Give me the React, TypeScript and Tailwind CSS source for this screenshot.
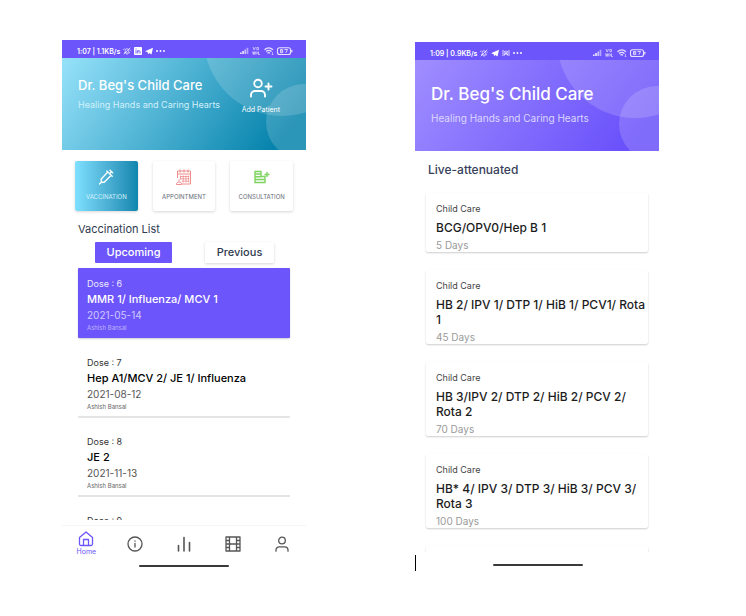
import type { ReactNode } from "react";

type Dose = { dose: number; title: string; date: string; parent: string };
type Vaccine = { title: string; due: string };

const doses: Dose[] = [
  { dose: 6, title: "MMR 1/ Influenza/ MCV 1", date: "2021-05-14", parent: "Ashish Bansal" },
  { dose: 7, title: "Hep A1/MCV 2/ JE 1/ Influenza", date: "2021-08-12", parent: "Ashish Bansal" },
  { dose: 8, title: "JE 2", date: "2021-11-13", parent: "Ashish Bansal" },
  { dose: 9, title: "", date: "", parent: "" },
];

const vaccines: Vaccine[] = [
  { title: "BCG/OPV0/Hep B 1", due: "5 Days" },
  { title: "HB 2/ IPV 1/ DTP 1/ HiB 1/ PCV1/ Rota 1", due: "45 Days" },
  { title: "HB 3/IPV 2/ DTP 2/ HiB 2/ PCV 2/ Rota 2", due: "70 Days" },
  { title: "HB* 4/ IPV 3/ DTP 3/ HiB 3/ PCV 3/ Rota 3", due: "100 Days" },
];

function MuteIcon() {
  return (
    <svg viewBox="0 0 16 16" className="size-2" fill="none" stroke="currentColor" strokeWidth="1.400">
      <path d="M3 12h10l-1.500-2V7a3.500 3.500 0 0 0-7 0v3L3 12zM6.500 14h3M1.500 14.500l13-13M1 6l1.500-3M15 7l-1-2" />
    </svg>
  );
}

function LinkedInIcon() {
  return (
    <svg viewBox="0 0 16 16" className="size-2">
      <rect width="16" height="16" rx="1.500" fill="currentColor" />
      <path d="M4 6.500V13M4 3v1.800M7.500 13V6.500M7.500 9.500c0-3 4.500-3 4.500 0V13" fill="none" stroke="#6c55fb" strokeWidth="1.900" />
    </svg>
  );
}

function TelegramIcon() {
  return (
    <svg viewBox="0 0 16 16" className="size-2" fill="currentColor">
      <path d="M0 8.500 16 1.500 13 15 8.500 12 6 14.500 5.500 10.500z" />
    </svg>
  );
}

function CastIcon() {
  return (
    <svg viewBox="0 0 16 16" className="size-2" fill="none" stroke="currentColor" strokeWidth="1.500">
      <path d="M2 2v12M14 2v12M4.500 4c2 2.500 2 5.500 0 8M11.500 4c-2 2.500-2 5.500 0 8M5 13l3-5 3 5M8 3v5" />
    </svg>
  );
}

function DotsIcon() {
  return (
    <svg viewBox="0 0 18 16" className="h-2 w-[9px]" fill="currentColor">
      <circle cx="2" cy="8" r="1.900" />
      <circle cx="9" cy="8" r="1.900" />
      <circle cx="16" cy="8" r="1.900" />
    </svg>
  );
}

function SignalIcons() {
  return (
    <svg viewBox="0 0 53 10" className="h-[10px] w-[53px] text-[#e6e1ff]" fill="currentColor" aria-label="Signal, wifi and battery">
      <rect x="0" y="6.500" width="1.700" height="1.500" />
      <rect x="2.200" y="5" width="1.700" height="3" />
      <rect x="4.400" y="3.500" width="1.700" height="4.500" opacity=".75" />
      <rect x="6.600" y="1.800" width="1.700" height="6.200" opacity=".6" />
      <path d="m13 1 1.200 3L15.500 1M16.800 1.500h1.700v2.200h-1.700zM12.500 5.500l.8 3 .8-3 .8 3 .8-3M16.800 5.500v3M18.500 5.500v3h1.500M17 7h1.500" fill="none" stroke="currentColor" strokeWidth=".7" />
      <path d="M24.500 3.700c2.500-2.200 6-2.200 8.500 0M26 5.500c1.800-1.500 3.800-1.500 5.500 0M27.500 7.200c.8-.7 1.700-.7 2.500 0" fill="none" stroke="currentColor" strokeWidth="1.300" />
      <path d="M32.500 6v2.800M31.700 8l.8.900.8-.9" fill="none" stroke="currentColor" strokeWidth=".6" />
      <rect x="37.500" y="1.700" width="13" height="6.800" rx="2" fill="none" stroke="currentColor" strokeWidth="1.100" />
      <rect x="51.200" y="3.800" width="1.200" height="2.600" rx=".5" />
      <path d="M40.500 3.500h2.200v3.200h-2.200zM40.500 5h2.200M44.500 3.500h3L45.800 6.800" fill="none" stroke="currentColor" strokeWidth=".9" />
    </svg>
  );
}

function StatusBar({ label, children }: { label: string; children: ReactNode }) {
  return (
    <div className="flex h-[18px] items-center justify-between bg-[#6c55fb] pt-1 pr-[13px] pl-[15px] text-white">
      <div className="flex items-center gap-[3px]">
        <span className="text-[7px] leading-none font-semibold whitespace-nowrap">{label}</span>
        {children}
      </div>
      <SignalIcons />
    </div>
  );
}

function Bubbles() {
  return (
    <svg className="absolute top-0 right-0 h-full w-[104px]" viewBox="140 0 104 92" preserveAspectRatio="xMaxYMin slice" fill="#fff" fillOpacity=".16" aria-hidden="true">
      <circle cx="220" cy="-20" r="78" />
      <circle cx="242" cy="64" r="38" />
    </svg>
  );
}

function AddPatientIcon() {
  return (
    <svg viewBox="0 0 24 20" className="h-5 w-6" fill="none" stroke="currentColor" strokeWidth="1.900" strokeLinecap="round">
      <circle cx="9" cy="5.500" r="3.800" />
      <path d="M2 18.500v-1.500a4 4 0 0 1 4-4h6a4 4 0 0 1 4 4v1.500M19.500 5.500v6M16.500 8.500h6" />
    </svg>
  );
}

function SyringeIcon() {
  return (
    <svg viewBox="0 0 16 16" className="size-4 text-white" fill="none" stroke="currentColor" strokeWidth="1.300" strokeLinecap="round" strokeLinejoin="round">
      <path d="m1.500 15 2-2M3 10.300 3.500 13l2.700.3 7-7L9.800 3zM8.800 2l5.400 5.200M11.500 4.700l2-2M12 1.200l2.700 2.600" />
    </svg>
  );
}

function CalendarIcon() {
  return (
    <svg viewBox="0 0 16 16" className="size-4 text-[#f08080]" fill="none" stroke="currentColor" strokeWidth=".9">
      <path d="M1.500 9V2h13v13H5.500M1.500 5h13M4 .5v3M8 .5v3M12 .5v3" />
      <path d="M4 7.500h9M4 9.800h9M6 12.200h7M4.500 6.500v4M7.200 6.500v7M10 6.500v7M12.700 6.500v7" strokeWidth=".7" />
      <path d="M.5 15.500c0-2 1-2.500 2.500-2.500s2.500.5 2.500 2.500zM3 10.500v2" />
    </svg>
  );
}

function ConsultIcon() {
  return (
    <svg viewBox="0 0 16 14" className="h-[14px] w-4 text-[#7ed45f]" fill="none" stroke="currentColor" strokeWidth="1.400">
      <path d="M1 1.500h6v5h4v6H1zM1 4h6M1 6.700h6M1 9.500h10M13 2v5M10.500 4.500h5" />
    </svg>
  );
}

function ServiceCard({ label, icon, active = false }: { label: string; icon: ReactNode; active?: boolean }) {
  const look = active
    ? "bg-linear-to-r from-[#7fe0ff] to-[#0a86ae] text-[#d3f0fa]"
    : "bg-white text-[#666a78]";
  return (
    <button className={`flex h-[50px] flex-col items-center gap-[7px] rounded-xs pt-2 shadow-[0_1px_3px_rgba(0,0,0,0.16)] ${look}`}>
      <span className="flex h-4 items-center">{icon}</span>
      <span className="text-[6px] leading-[10px]">{label}</span>
    </button>
  );
}

function DoseCard({ item, active }: { item: Dose; active: boolean }) {
  const box = active
    ? "bg-[#6c55fb] text-white shadow-[0_1px_2px_rgba(0,0,0,0.2)]"
    : "border-b border-[#e4e4e4] bg-white text-black shadow-[0_1px_0_#e4e4e4]";
  const date = active ? "text-[#cfc8ff]" : "text-[#555]";
  const parent = active ? "text-[#bdb3ff]" : "text-[#666]";
  return (
    <li className={`flex h-[70px] shrink-0 flex-col rounded-[1px] px-[9px] pt-[9px] ${box}`}>
      <span className={`text-[9px] leading-[14px] ${active ? "text-[#ece9ff]" : "text-[#333]"}`}>Dose : {item.dose}</span>
      <h3 className="text-[11px] leading-4 font-medium">{item.title}</h3>
      <span className={`text-[10px] leading-4 ${date}`}>{item.date}</span>
      <span className={`text-[6px] leading-[9px] ${parent}`}>{item.parent}</span>
    </li>
  );
}

function NavItem({ label, active = false, children }: { label: string; active?: boolean; children: ReactNode }) {
  return (
    <button aria-label={label} className={`flex flex-col items-center justify-center ${active ? "text-[#6c55fb]" : "text-[#555]"}`}>
      <svg viewBox="0 0 16 16" className="size-4" fill="none" stroke="currentColor" strokeWidth="1.300" strokeLinecap="round" strokeLinejoin="round">
        {children}
      </svg>
      {active && <span className="text-[7px] leading-[9px]">{label}</span>}
    </button>
  );
}

function HomeScreen() {
  return (
    <section className="min-w-0 flex-1">
      <StatusBar label="1:07 | 1.1KB/s">
        <MuteIcon />
        <LinkedInIcon />
        <TelegramIcon />
        <DotsIcon />
      </StatusBar>
      <header className="relative flex h-[92px] justify-between overflow-hidden bg-linear-[125deg] from-[#97e2fa] to-[#0482ab] to-90% pr-[26px] pl-4 text-white">
        <Bubbles />
        <div className="relative pt-[17px]">
          <h1 className="text-[13px] leading-5 font-medium whitespace-nowrap">Dr. Beg's Child Care</h1>
          <p className="text-[9px] leading-5 whitespace-nowrap text-[#d0f0fb]">Healing Hands and Caring Hearts</p>
        </div>
        <button className="relative flex flex-col items-center pt-5 text-[7px] leading-3 whitespace-nowrap">
          <AddPatientIcon />
          <span className="pt-[6px]">Add Patient</span>
        </button>
      </header>
      <div className="grid grid-cols-3 gap-[15px] px-[13px] pt-[11px]">
        <ServiceCard label="VACCINATION" icon={<SyringeIcon />} active />
        <ServiceCard label="APPOINTMENT" icon={<CalendarIcon />} />
        <ServiceCard label="CONSULTATION" icon={<ConsultIcon />} />
      </div>
      <h2 className="px-4 pt-[10px] text-[11px] leading-4 text-[#2f3a4f]">Vaccination List</h2>
      <div className="flex justify-between pt-[5px] pr-8 pl-[33px] text-[11px] leading-[21px] font-medium">
        <button className="w-[77px] rounded-[1px] bg-[#6c55fb] text-white">Upcoming</button>
        <button className="w-[69px] rounded-[1px] bg-white text-[#2f3a4f] shadow-[0_1px_3px_rgba(0,0,0,0.16)]">Previous</button>
      </div>
      <ul className="flex h-[257px] flex-col gap-[9px] overflow-hidden px-4 pt-[5px]">
        {doses.map((item, i) => (
          <DoseCard key={item.dose} item={item} active={i === 0} />
        ))}
      </ul>
      <nav className="mt-[5px] grid h-9 grid-cols-5 border-t border-[#f5f5f5]">
        <NavItem label="Home" active>
          <path d="M1.500 6.500 8 1l6.500 5.500V13a1.500 1.500 0 0 1-1.500 1.500H3A1.500 1.500 0 0 1 1.500 13zM5.500 14.500V8.500h5v6" />
        </NavItem>
        <NavItem label="Info">
          <circle cx="8" cy="8" r="7" />
          <path d="M8 7.500V11M8 5v.2" />
        </NavItem>
        <NavItem label="Statistics">
          <path d="M2.500 9.500V15M8 1.500V15M13.500 6.500V15" strokeWidth="1.600" />
        </NavItem>
        <NavItem label="Videos">
          <path d="M1 1h14v14H1zM4.500 1v14M11.500 1v14M1 8h14M1 4.500h3.500M1 11.500h3.500M11.500 4.500H15M11.500 11.500H15" />
        </NavItem>
        <NavItem label="Profile">
          <circle cx="8" cy="4.500" r="3.300" />
          <path d="M2 15.200V14a3.200 3.200 0 0 1 3.200-3.200h5.600A3.200 3.200 0 0 1 14 14v1.200" />
        </NavItem>
      </nav>
      <div className="mx-auto mt-1 h-[2px] w-[90px] rounded-full bg-[#3a3a3a]" />
    </section>
  );
}

function VaccineScreen() {
  return (
    <section className="min-w-0 flex-1 pt-[2px]">
      <StatusBar label="1:09 | 0.9KB/s">
        <MuteIcon />
        <TelegramIcon />
        <CastIcon />
        <DotsIcon />
      </StatusBar>
      <header className="relative h-[91px] overflow-hidden bg-linear-[125deg] from-[#a08eff] to-[#6850fb] to-90% px-4 pt-[22px] text-white">
        <Bubbles />
        <h1 className="relative text-[17px] leading-6 font-medium whitespace-nowrap">Dr. Beg's Child Care</h1>
        <p className="relative text-[10px] leading-6 whitespace-nowrap text-[#dcd6ff]">Healing Hands and Caring Hearts</p>
      </header>
      <h2 className="px-[13px] pt-[11px] text-[12px] leading-4 font-medium text-[#37415a]">Live-attenuated</h2>
      <ul className="mt-[9px] flex h-[365px] flex-col gap-[18px] overflow-hidden px-[11px] pt-[6px]">
        {vaccines.map((item) => (
          <li key={item.title} className="shrink-0 overflow-hidden rounded-xs bg-white px-[10px] pt-[9px] shadow-[0_1px_2px_rgba(0,0,0,0.2)]">
            <p className="text-[9px] leading-[14px] text-[#444]">Child Care</p>
            <h3 className="-mr-[12px] pt-1 text-[12px] leading-[15px] font-medium text-[#1c1c1c]">{item.title}</h3>
            <p className="pt-1 text-[10px] leading-[13px] text-[#9a9a9a]">{item.due}</p>
          </li>
        ))}
        <li className="h-[74px] shrink-0 rounded-xs bg-white shadow-[0_1px_2px_rgba(0,0,0,0.2)]" />
      </ul>
      <div className="mt-[3px] flex h-4 items-center justify-center border-l border-black pt-[3px]">
        <div className="h-[2px] w-[90px] rounded-full bg-[#3a3a3a]" />
      </div>
    </section>
  );
}

export default function App() {
  return (
    <main className="flex min-h-screen items-start gap-[109px] bg-white pt-10 pr-[87px] pl-[62px] font-['Inter',sans-serif]">
      <HomeScreen />
      <VaccineScreen />
    </main>
  );
}
